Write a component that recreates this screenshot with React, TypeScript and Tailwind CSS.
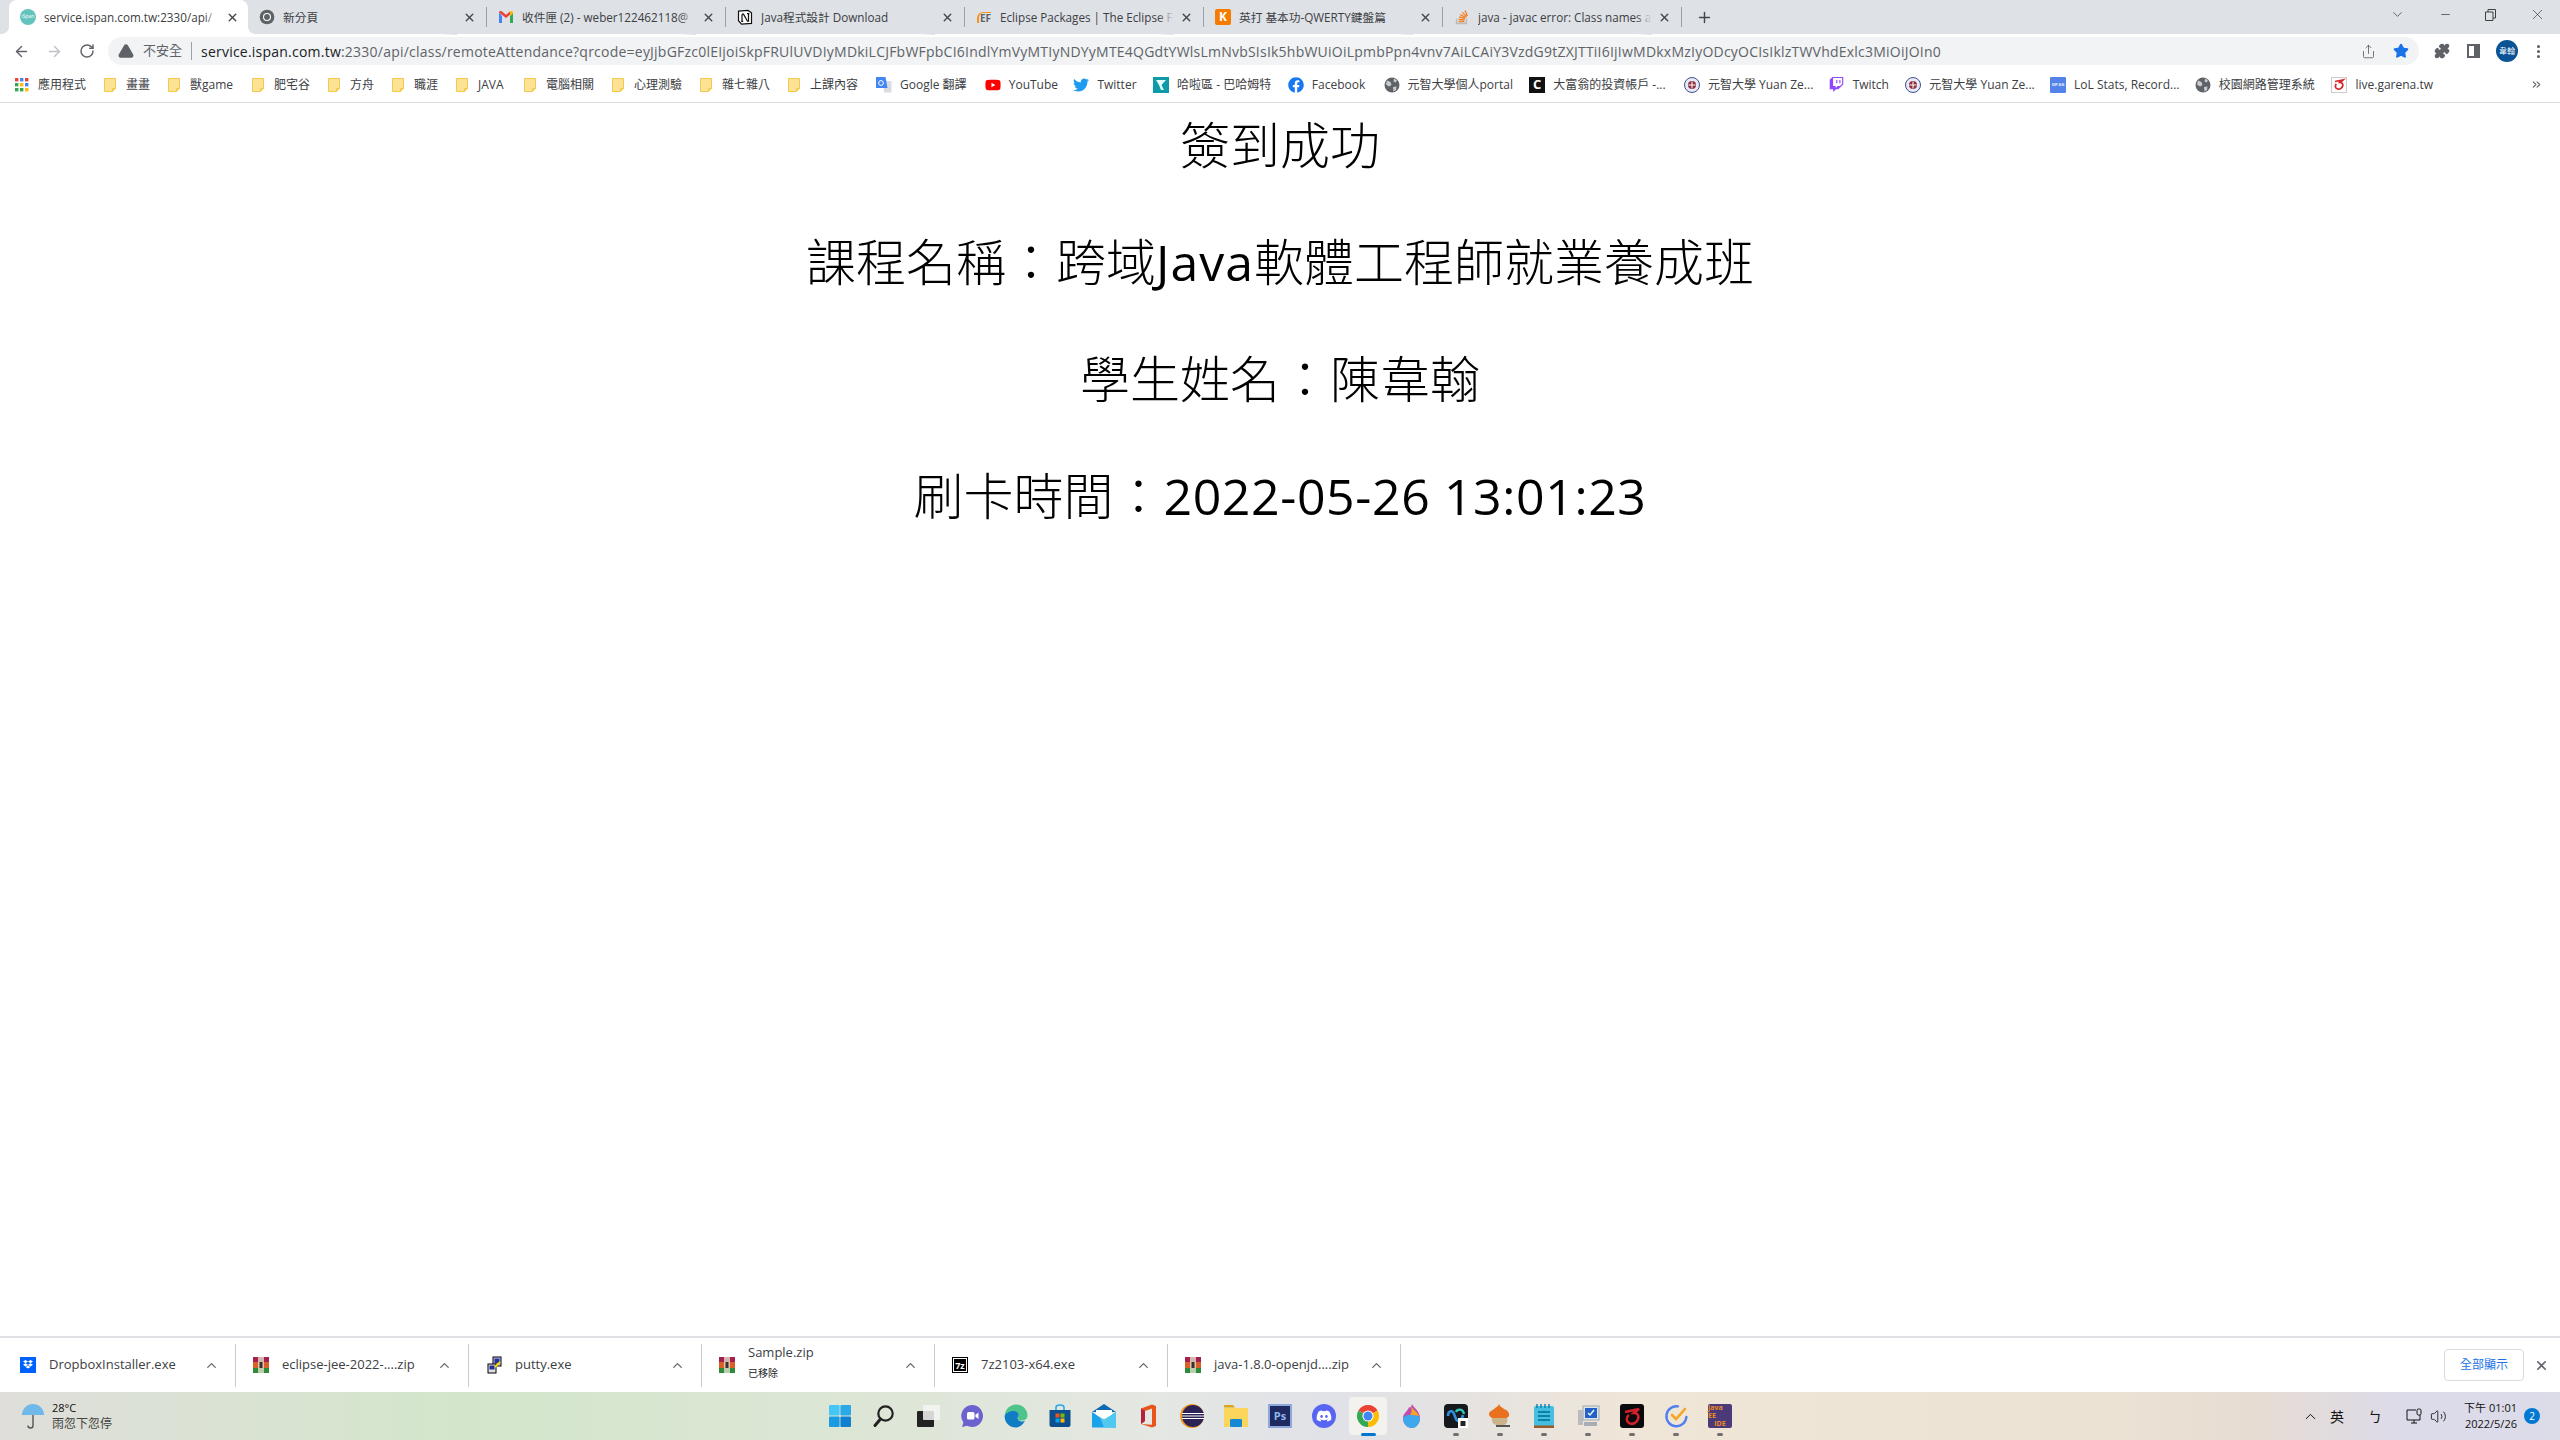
import type { ReactNode } from "react";
import { ArrowLeft, ArrowRight, RotateCw, Share, Star, Puzzle, EllipsisVertical, ChevronDown, ChevronUp, X, Plus, Minus, TriangleAlert, Volume2, ChevronsRight } from "lucide-react";
import { FaDiscord, FaFacebook, FaTwitch, FaTwitter, FaYoutube } from "react-icons/fa";

const Chrome = ({ size = 16 }: { size?: number }) => (
  <svg width={size} height={size} viewBox="0 0 24 24">
    <path d="M12 12L2.47 6.5A11 11 0 0 1 21.53 6.5Z" fill="#ea4335" />
    <path d="M12 12L12 23A11 11 0 0 1 2.47 6.5Z" fill="#34a853" />
    <path d="M12 12L21.53 6.5A11 11 0 0 1 12 23Z" fill="#fbbc05" />
    <circle cx="12" cy="12" r="5.6" fill="#fff" />
    <circle cx="12" cy="12" r="4.5" fill="#4285f4" />
  </svg>
);

const GrayChrome = () => (
  <svg width="16" height="16" viewBox="0 0 24 24">
    <circle cx="12" cy="12" r="11" fill="#5f6368" />
    <circle cx="12" cy="12" r="6" fill="#fff" />
    <circle cx="12" cy="12" r="4.4" fill="#5f6368" />
  </svg>
);

const Folder = () => (
  <svg width="12" height="14" viewBox="0 0 12 14">
    <path d="M.5.5h11v10l-3 3H.5z" fill="#fde293" stroke="#f2c94c" />
    <path d="M8.5 13.5v-3h3" fill="none" stroke="#f2c94c" />
  </svg>
);

const Gmail = () => (
  <svg width="16" height="16" viewBox="0 0 16 16">
    <path d="M1 3.5V14h3V7z" fill="#4285f4" />
    <path d="M15 3.5V14h-3V7z" fill="#34a853" />
    <path d="M1 3.5 8 9l4-3.2V2.6L8 5.7 4 2.6C2.500 1.500 1 2.300 1 3.500z" fill="#ea4335" />
    <path d="M12 2.600v4.400l3-2.400V3.500c0-1.200-1.500-2-3-.9z" fill="#fbbc05" />
  </svg>
);

const Notion = () => (
  <svg width="16" height="16" viewBox="0 0 16 16">
    <path d="M1.500 2.200 11 1.400l3.500 2.400v10.600l-10 .7-3-3.400z" fill="#fff" stroke="#111" strokeWidth="1.200" />
    <path d="M5 5.200v7M5 5.200h1.500l4 7h1V4.600M4.200 12.400h2M10 4.600h2.400" fill="none" stroke="#111" strokeWidth="1.200" />
  </svg>
);

const StackOverflow = () => (
  <svg width="16" height="16" viewBox="0 0 16 16">
    <path d="M2.500 9.500v5h10v-5" fill="none" stroke="#bcbbbb" strokeWidth="1.400" />
    <path d="M4.500 12.500h6M4.600 10.300l6 .6M5.200 8l5.800 1.600M6.400 5.600l5.200 3M8.400 3.400l4.200 4.400M11 1.600l2.400 5.400" stroke="#f48024" strokeWidth="1.300" fill="none" />
  </svg>
);

const tabs: { title: string; icon: ReactNode }[] = [
  { title: "新分頁", icon: <GrayChrome /> },
  { title: "收件匣 (2) - weber122462118@", icon: <Gmail /> },
  { title: "Java程式設計 Download", icon: <Notion /> },
  {
    title: "Eclipse Packages | The Eclipse F",
    icon: <span className="rounded-tl-md border-l-2 border-t border-[#f7941e] pl-[1px] text-[10px] font-bold leading-none text-[#5f6368]">EF</span>,
  },
  {
    title: "英打 基本功-QWERTY鍵盤篇",
    icon: <span className="flex h-4 w-4 items-center justify-center rounded-[2px] bg-[#f57c00] text-[12px] font-bold leading-none text-white">K</span>,
  },
  { title: "java - javac error: Class names a", icon: <StackOverflow /> },
];

const TabTitle = ({ text, bg }: { text: string; bg: string }) => (
  <div className="relative min-w-0 flex-1 overflow-hidden whitespace-nowrap text-[11.7px] leading-[35px] text-[#3c4043]">
    {text}
    <span className={`absolute inset-y-0 right-0 w-4 ${bg}`} />
  </div>
);

const TabStrip = () => (
  <div className="flex h-[34px] shrink-0 items-stretch bg-[#dee1e6] pl-[9px]">
    <div className="relative flex w-[239px] items-center rounded-t-[8px] bg-white pl-[11px] pr-[9px]">
      <span className="absolute -left-2 bottom-0 h-2 w-2 bg-[radial-gradient(circle_at_0_0,transparent_8px,white_8px)]" />
      <span className="absolute -right-2 bottom-0 h-2 w-2 bg-[radial-gradient(circle_at_100%_0,transparent_8px,white_8px)]" />
      <span className="mr-2 flex h-4 w-4 shrink-0 items-center justify-center rounded-full bg-[#63c3bd] text-[5px] text-white">iSpan</span>
      <TabTitle text="service.ispan.com.tw:2330/api/" bg="bg-gradient-to-r from-transparent to-white" />
      <X size={13} strokeWidth={2.6} className="ml-[6px] shrink-0 text-[#45474a]" />
    </div>
    {tabs.map((t) => (
      <div key={t.title} className="flex w-[239px] items-center pl-[11px]">
        <span className="mr-2 flex h-4 w-4 shrink-0 items-center justify-center">{t.icon}</span>
        <TabTitle text={t.title} bg="bg-gradient-to-r from-transparent to-[#dee1e6]" />
        <X size={13} strokeWidth={2.6} className="ml-[6px] shrink-0 text-[#45474a]" />
        <span className="ml-[10px] h-[20px] w-px shrink-0 bg-[#9aa0a6]" />
      </div>
    ))}
    <div className="flex w-[44px] items-center justify-center">
      <Plus size={17} strokeWidth={2} className="text-[#45474a]" />
    </div>
    <div className="flex-1" />
    <div className="flex items-start text-[#3c4043]">
      <ChevronDown size={15} strokeWidth={1.2} className="mr-[34px] mt-[7px]" />
      <Minus size={13} strokeWidth={1.4} className="mr-[33px] mt-[8px]" />
      <svg width="11" height="12" viewBox="0 0 11 12" className="mr-[33px] mt-[9px]">
        <path d="M.5 3h7.500v8.500H.5zM3 3V.5h7.500V9H8" fill="none" stroke="#3c4043" />
      </svg>
      <X size={17} strokeWidth={1} className="mr-[14px] mt-[6px]" />
    </div>
  </div>
);

const Toolbar = () => (
  <div className="flex h-[34px] shrink-0 items-center bg-white">
    <div className="flex w-[108px] shrink-0 items-center pl-[13px] text-[#5f6368]">
      <ArrowLeft size={17} strokeWidth={2} />
      <ArrowRight size={17} strokeWidth={2} className="ml-[16px] text-[#bdc1c6]" />
      <RotateCw size={16} strokeWidth={2.2} className="ml-[16px]" />
    </div>
    <div className="flex h-[28px] w-[2311px] shrink-0 items-center rounded-full bg-[#f1f3f4] pl-[10px] pr-[10px]">
      <TriangleAlert size={16} strokeWidth={2.4} className="shrink-0 fill-[#5f6368] text-[#5f6368]" />
      <span className="ml-[9px] shrink-0 text-[13px] text-[#5f6368]">不安全</span>
      <span className="mx-[9px] h-[18px] w-px shrink-0 bg-[#9aa0a6]" />
      <span className="min-w-0 flex-1 truncate text-[14px] tracking-[0.225px] text-[#5f6368]">
        <span className="text-[#202124]">service.ispan.com.tw</span>
        :2330/api/class/remoteAttendance?qrcode=eyJjbGFzc0lEIjoiSkpFRUlUVDIyMDkiLCJFbWFpbCI6IndlYmVyMTIyNDYyMTE4QGdtYWlsLmNvbSIsIk5hbWUiOiLpmbPpn4vnv7AiLCAiY3VzdG9tZXJTTiI6IjIwMDkxMzIyODcyOCIsIklzTWVhdExlc3MiOiJOIn0
      </span>
      <Share size={15} strokeWidth={1.4} className="ml-[8px] shrink-0 text-[#5f6368]" />
      <Star size={16} className="ml-[17px] shrink-0 fill-[#1a73e8] text-[#1a73e8]" />
    </div>
    <Puzzle size={16} className="ml-[15px] shrink-0 fill-[#5f6368] text-[#5f6368]" />
    <span className="ml-[17px] flex h-[14px] w-[13px] shrink-0 justify-end border-2 border-[#5f6368]">
      <span className="h-full w-[4px] bg-[#5f6368]" />
    </span>
    <span className="ml-[16px] flex h-[22px] w-[22px] shrink-0 items-center justify-center rounded-full bg-[#0b5394] text-[8px] text-white">韋翰</span>
    <EllipsisVertical size={17} strokeWidth={2.4} className="ml-[12px] shrink-0 text-[#5f6368]" />
  </div>
);

const Apps = () => (
  <svg width="14" height="14" viewBox="0 0 14 14">
    {[
      [0, 0, "#ea4335"],
      [5, 0, "#4285f4"],
      [10, 0, "#ea4335"],
      [0, 5, "#34a853"],
      [5, 5, "#fbbc05"],
      [10, 5, "#4285f4"],
      [0, 10, "#34a853"],
      [5, 10, "#34a853"],
      [10, 10, "#fbbc05"],
    ].map(([x, y, c]) => (
      <rect key={`${x}-${y}`} x={x as number} y={y as number} width="3.4" height="3.4" fill={c as string} />
    ))}
  </svg>
);

const GoogleTranslate = () => (
  <svg width="16" height="16" viewBox="0 0 16 16">
    <path d="M7 4h8.500v11.500H8z" fill="#dadce0" />
    <path d="M0 0h9.500l2 11H0z" fill="#4285f4" />
    <circle cx="5" cy="6" r="2.400" fill="none" stroke="#fff" strokeWidth="1" />
  </svg>
);

const GrayGlobe = () => (
  <svg width="16" height="16" viewBox="0 0 16 16">
    <circle cx="8" cy="8" r="7.500" fill="#5f6368" />
    <path d="M3 3.500 6.500 5 7.500 8 5 9.500 2 7.500zM10 1.500l3 2-1.500 2-2-1zM9 10l3.500-.5L12 13l-2.500 1.500z" fill="#c9ccd0" />
  </svg>
);

const Crest = () => (
  <svg width="16" height="16" viewBox="0 0 16 16">
    <circle cx="8" cy="8" r="7.500" fill="#e8eaf6" stroke="#3f4f8f" />
    <circle cx="8" cy="8" r="4" fill="#8e3040" />
    <path d="M8 4.500v7M4.500 8h7" stroke="#fff" />
  </svg>
);

const Bahamut = () => (
  <svg width="16" height="16" viewBox="0 0 16 16">
    <rect width="16" height="16" fill="#0f9aa8" />
    <path d="M3 3h10L8.500 8 11 13H8L6 8z" fill="#e6fbfb" />
  </svg>
);

const Garena = () => (
  <svg width="16" height="16" viewBox="0 0 16 16">
    <rect x=".5" y=".5" width="15" height="15" fill="#fff" stroke="#ccc" />
    <path d="M4 4.500 12 3 9 5.500c2 0 3 1.400 2.800 3C11.400 11 9 12.500 6.600 12 4.200 11.400 3.600 8.600 5.400 7" fill="none" stroke="#d8232a" strokeWidth="1.700" />
  </svg>
);

const folders: { label: string; w: string }[] = [
  { label: "畫畫", w: "w-[24px]" },
  { label: "獸game", w: "w-[44px]" },
  { label: "肥宅谷", w: "w-[36px]" },
  { label: "方舟", w: "w-[24px]" },
  { label: "職涯", w: "w-[24px]" },
  { label: "JAVA", w: "w-[28px]" },
  { label: "電腦相關", w: "w-[48px]" },
  { label: "心理測驗", w: "w-[48px]" },
  { label: "雜七雜八", w: "w-[48px]" },
  { label: "上課內容", w: "w-[48px]" },
];

const bookmarks: { label: string; w: string; icon: ReactNode }[] = [
  { label: "Google 翻譯", w: "w-[68px]", icon: <GoogleTranslate /> },
  { label: "YouTube", w: "w-[48px]", icon: <FaYoutube size={16} className="text-[#ff0000]" /> },
  { label: "Twitter", w: "w-[39px]", icon: <FaTwitter size={16} className="text-[#1d9bf0]" /> },
  { label: "哈啦區 - 巴哈姆特", w: "w-[94px]", icon: <Bahamut /> },
  { label: "Facebook", w: "w-[55px]", icon: <FaFacebook size={16} className="text-[#1877f2]" /> },
  { label: "元智大學個人portal", w: "w-[105px]", icon: <GrayGlobe /> },
  {
    label: "大富翁的投資帳戶 -...",
    w: "w-[114px]",
    icon: <span className="flex h-4 w-4 items-center justify-center bg-[#111] text-[13px] font-bold leading-none text-white">C</span>,
  },
  { label: "元智大學 Yuan Ze...", w: "w-[104px]", icon: <Crest /> },
  { label: "Twitch", w: "w-[36px]", icon: <FaTwitch size={15} className="text-[#9146ff]" /> },
  { label: "元智大學 Yuan Ze...", w: "w-[104px]", icon: <Crest /> },
  {
    label: "LoL Stats, Record...",
    w: "w-[104px]",
    icon: <span className="flex h-4 w-4 items-center justify-center rounded-[1px] bg-[#5383e8] text-[4px] font-bold text-white">OP.GG</span>,
  },
  { label: "校園網路管理系統", w: "w-[96px]", icon: <GrayGlobe /> },
  { label: "live.garena.tw", w: "w-[77px]", icon: <Garena /> },
];

const BookmarkBar = () => (
  <div className="flex h-[35px] shrink-0 items-center border-b border-[#dadce0] bg-white pb-[1px] pl-[15px] text-[12px] text-[#3c4043]">
    <div className="flex flex-1 items-center gap-[18px] whitespace-nowrap">
      <div className="flex items-center gap-[9px]">
        <Apps />
        <span className="w-[48px]">應用程式</span>
      </div>
      {folders.map((f) => (
        <div key={f.label} className="flex items-center gap-[10px]">
          <Folder />
          <span className={f.w}>{f.label}</span>
        </div>
      ))}
      {bookmarks.map((b, i) => (
        <div key={i} className="-mr-[1.3px] flex items-center gap-[8px]">
          <span className="flex w-4 items-center justify-center">{b.icon}</span>
          <span className={b.w}>{b.label}</span>
        </div>
      ))}
    </div>
    <ChevronsRight size={13} className="mr-[17px] text-[#5f6368]" />
  </div>
);

const WinRar = () => (
  <svg width="16" height="16" viewBox="0 0 16 16">
    <rect x="0" y="0" width="16" height="5" fill="#a3214f" />
    <rect x="0" y="5" width="16" height="6" fill="#d9602a" />
    <rect x="0" y="11" width="16" height="5" fill="#2f8a3c" />
    <rect x="5" y="0" width="6" height="16" fill="#e9e4d0" opacity=".75" />
    <rect x="6.500" y="5" width="3" height="6" fill="#333" />
  </svg>
);

const Dropbox = () => (
  <span className="flex h-4 w-4 items-center justify-center bg-[#0061ff]">
    <svg width="10" height="10" viewBox="0 0 10 10" fill="#fff">
      <path d="M2.500 0 5 1.600 2.500 3.200 0 1.600zM7.500 0 10 1.600 7.500 3.200 5 1.600zM2.500 3.200 5 4.800 2.500 6.400 0 4.800zM7.500 3.200 10 4.800 7.500 6.400 5 4.800zM2.500 7 5 5.400 7.500 7 5 8.600z" />
    </svg>
  </span>
);

const Putty = () => (
  <svg width="16" height="18" viewBox="0 0 16 18">
    <rect x="7" y="1" width="8" height="9" fill="#c8c8e8" stroke="#000" />
    <rect x="8.500" y="2.500" width="5" height="5" fill="#2030a0" />
    <rect x="2" y="8" width="8" height="9" fill="#e0e0e0" stroke="#000" />
    <rect x="3.500" y="9.500" width="5" height="4" fill="#2030a0" />
    <path d="M9 11 14 6" stroke="#f5d800" strokeWidth="2" />
  </svg>
);

const SevenZip = () => (
  <span className="flex h-4 w-4 items-center justify-center border border-black bg-white">
    <span className="flex h-[12px] w-[12px] items-center justify-center bg-black text-[9px] font-bold leading-none text-white">7z</span>
  </span>
);

const downloads: { name: string; sub?: string; icon: ReactNode }[] = [
  { name: "DropboxInstaller.exe", icon: <Dropbox /> },
  { name: "eclipse-jee-2022-....zip", icon: <WinRar /> },
  { name: "putty.exe", icon: <Putty /> },
  { name: "Sample.zip", sub: "已移除", icon: <WinRar /> },
  { name: "7z2103-x64.exe", icon: <SevenZip /> },
  { name: "java-1.8.0-openjd....zip", icon: <WinRar /> },
];

const DownloadBar = () => (
  <div className="flex h-[56px] shrink-0 items-center border-t-2 border-[#dfe1e5] bg-white pl-[3px]">
    {downloads.map((d) => (
      <div key={d.name} className="flex h-[43px] w-[233px] shrink-0 items-center border-r border-[#c8cacd] pl-[17px] pr-[16px]">
        <span className="flex w-4 shrink-0 items-center justify-center">{d.icon}</span>
        <div className="ml-[13px] min-w-0 flex-1 text-[#3c4043]">
          <div className={`whitespace-nowrap text-[13px] ${d.sub ? "-mt-[8px]" : ""}`}>{d.name}</div>
          {d.sub && <div className="mt-[5px] text-[10px] leading-[12px] text-[#202124]">{d.sub}</div>}
        </div>
        <ChevronUp size={15} strokeWidth={2} className="shrink-0 text-[#5f6368]" />
      </div>
    ))}
    <div className="flex-1" />
    <div className="flex h-[32px] w-[80px] items-center justify-center rounded-[4px] border border-[#dadce0] text-[12px] text-[#1a73e8]">全部顯示</div>
    <X size={15} strokeWidth={2.6} className="ml-[10px] mr-[11px] text-[#5f6368]" />
  </div>
);

const Icon24 = ({ children }: { children: ReactNode }) => (
  <svg width="24" height="24" viewBox="0 0 24 24">
    {children}
  </svg>
);

const TaskIcons: { key: string; dot?: boolean; node: ReactNode }[] = [
  {
    key: "start",
    node: (
      <Icon24>
        <rect x="1" y="1" width="10.600" height="10.600" rx="1" fill="#46c6f4" />
        <rect x="12.400" y="1" width="10.600" height="10.600" rx="1" fill="#2aa9ea" />
        <rect x="1" y="12.400" width="10.600" height="10.600" rx="1" fill="#1a9ae0" />
        <rect x="12.400" y="12.400" width="10.600" height="10.600" rx="1" fill="#0f7fd0" />
      </Icon24>
    ),
  },
  {
    key: "search",
    node: (
      <Icon24>
        <circle cx="13.500" cy="9.500" r="7.200" fill="none" stroke="#222" strokeWidth="2.200" />
        <path d="M8.500 15 3 21.500" stroke="#222" strokeWidth="3" strokeLinecap="round" />
      </Icon24>
    ),
  },
  {
    key: "view",
    node: (
      <Icon24>
        <rect x="1" y="7" width="17" height="16" rx="1" fill="#222" />
        <rect x="7" y="1" width="17" height="15" rx="1" fill="#f4f4f4" fillOpacity=".85" />
      </Icon24>
    ),
  },
  {
    key: "chat",
    node: (
      <Icon24>
        <path d="M12 1a11 11 0 1 1-5 20.800L2 23l1.400-4.600A11 11 0 0 1 12 1z" fill="#6b62cf" />
        <rect x="7" y="8" width="7.500" height="7.500" rx="1.500" fill="#fff" />
        <path d="M15.400 10.800 18.500 8.600v6.400l-3.100-2.200z" fill="#fff" />
      </Icon24>
    ),
  },
  {
    key: "edge",
    node: (
      <Icon24>
        <path d="M12 .5C18 .5 23.500 5 23.500 11.500c0 3-2.500 5-5.500 5-2.500 0-4.500-1.200-4.500-2.600 0-1 1.300-1.400 1.300-3.200C14.800 8.500 12.500 7 9.500 7 5 7 1.500 9 .6 12 1 5.500 6 .5 12 .5z" fill="#4cc58a" />
        <path d="M.6 12C1.500 9 5 7 9.500 7c3 0 5.300 1.500 5.300 3.700 0 1.800-1.300 2.200-1.300 3.200 0 2 3.500 4.500 7.500 3.200C18.500 21 15.500 23.500 12 23.500 5.500 23.500.5 18.500.6 12z" fill="#0f7cc4" />
      </Icon24>
    ),
  },
  {
    key: "store",
    node: (
      <Icon24>
        <path d="M8 6V3.500C8 2 9.500 1 12 1s4 1 4 2.500V6" fill="none" stroke="#2aa9ea" strokeWidth="1.600" />
        <path d="M1.500 6h21v15a2 2 0 0 1-2 2h-17a2 2 0 0 1-2-2z" fill="#0c4f8c" />
        <rect x="7.500" y="9.500" width="4" height="4" fill="#f25022" />
        <rect x="12.500" y="9.500" width="4" height="4" fill="#7fba00" />
        <rect x="7.500" y="14.500" width="4" height="4" fill="#00a4ef" />
        <rect x="12.500" y="14.500" width="4" height="4" fill="#ffb900" />
      </Icon24>
    ),
  },
  {
    key: "mail",
    node: (
      <Icon24>
        <path d="M0 8 12 0l12 8z" fill="#0c68b5" />
        <path d="M4 6h16v8H4z" fill="#fff" />
        <path d="M0 8l12 8 12-8v15.500H0z" fill="#1aa3e8" />
        <path d="M24 8v15.500H12L8 13.500l4 2.500z" fill="#50c8f0" />
      </Icon24>
    ),
  },
  {
    key: "office",
    node: (
      <Icon24>
        <path d="M5 4.500 16 .5l4 1.500v20l-4 1.500-11-3.500 11 .8V4.500L9 7v10l-4 3z" fill="#e8541e" />
        <path d="M5 4.500 9 7v10l-4 3z" fill="#b5203a" />
      </Icon24>
    ),
  },
  {
    key: "eclipse",
    node: (
      <Icon24>
        <circle cx="12" cy="12" r="12" fill="#f39a1f" />
        <circle cx="13" cy="12" r="11" fill="#2c2255" />
        <path d="M2 9.500h22M2 12h22M2 14.500h22" stroke="#fff" strokeWidth="1.200" />
      </Icon24>
    ),
  },
  {
    key: "folder",
    node: (
      <Icon24>
        <path d="M0 2a1 1 0 0 1 1-1h8l2 2.500H0z" fill="#d9a514" />
        <path d="M0 4h24v19H0z" fill="#fcd65b" />
        <rect x="6" y="15" width="12" height="8" rx="1.200" fill="#1787d4" />
      </Icon24>
    ),
  },
  {
    key: "ps",
    node: <span className="flex h-[24px] w-[24px] items-center justify-center border-2 border-[#8ea8dc] bg-[#1f2a60] text-[11px] font-bold text-[#8fb8f0]">Ps</span>,
  },
  {
    key: "discord",
    node: (
      <span className="flex h-[24px] w-[24px] items-center justify-center rounded-full bg-[#5865f2]">
        <FaDiscord size={16} className="text-white" />
      </span>
    ),
  },
  { key: "chrome", node: <Chrome size={24} /> },
  {
    key: "paint",
    node: (
      <Icon24>
        <path d="M12 0c1 3 8 7 8 14a8.500 10 0 0 1-17 0C3 9 8 7 9 3c1 1 2 1 3-3z" fill="#c14db0" />
        <path d="M3 14c3-4 9-4 17-1 0 6-3 11-8 11s-9-4-9-10z" fill="#3da8ec" />
        <path d="M11 3c2 2 7 6 8 9-3-1-6-1-9-1 2-2 2-5 1-8z" fill="#f5a623" />
      </Icon24>
    ),
  },
  {
    key: "webex",
    dot: true,
    node: (
      <Icon24>
        <rect width="24" height="24" rx="4" fill="#15181c" />
        <path d="M4 12c0-6 5-6 6-2l2 5c1 3 6 2 7-4" fill="none" stroke="#2f8de0" strokeWidth="2.600" />
        <path d="M12 8c1-3 7-4 8 2" fill="none" stroke="#36c7b8" strokeWidth="2.400" />
        <rect x="14" y="14" width="10" height="10" fill="#fff" />
        <rect x="16.500" y="17" width="5" height="5" fill="#222" />
      </Icon24>
    ),
  },
  {
    key: "torch",
    dot: true,
    node: (
      <Icon24>
        <path d="M11 0c1 3 3 3 5 5 3 1 6 4 5 7-1 2-4 3-10 3S1 13 1 10c0-3 5-4 6-6 2-1 3-2 4-4z" fill="#e8701e" />
        <path d="M4 14h15c1 3 0 6-3 7H8c-3-1-5-4-4-7z" fill="#c9b48c" />
        <path d="M8 22h14" stroke="#555" strokeWidth="2" />
      </Icon24>
    ),
  },
  {
    key: "notepad",
    dot: true,
    node: (
      <Icon24>
        <rect x="2" y="2" width="20" height="21" rx="1.500" fill="#45bfe0" />
        <path d="M2 21.500h20V24H2z" fill="#9c5a2a" />
        <path d="M6 8h12M6 12h12M6 16h12" stroke="#0e7fa8" strokeWidth="2" />
        <path d="M5 0v4M9 0v4M13 0v4M17 0v4" stroke="#0e7fa8" strokeWidth="1.400" />
      </Icon24>
    ),
  },
  {
    key: "computer",
    dot: true,
    node: (
      <Icon24>
        <rect x="7" y="2" width="16" height="14" fill="#dfe3ea" stroke="#9aa" />
        <rect x="9" y="4" width="12" height="10" fill="#2460c8" />
        <path d="M12 9l2 2 4-5" stroke="#dfe" strokeWidth="1.400" fill="none" />
        <rect x="2" y="6" width="5" height="15" fill="#b8bcc0" />
        <rect x="8" y="18" width="13" height="4" fill="#a9adb3" />
      </Icon24>
    ),
  },
  {
    key: "garena",
    dot: true,
    node: (
      <Icon24>
        <rect width="24" height="24" rx="3" fill="#0a0a0c" />
        <path d="M5 8 19 5l-5 4c4 0 5 3 4 6-1 4-6 6-9 4-3-2-3-6 0-8" fill="none" stroke="#d4202a" strokeWidth="2.600" />
      </Icon24>
    ),
  },
  {
    key: "tick",
    dot: true,
    node: (
      <Icon24>
        <path d="M14 2.400A10 10 0 1 0 22.400 13" fill="none" stroke="#4f7ef0" strokeWidth="2.400" strokeLinecap="round" />
        <path d="M8 11l4 4 9-10" fill="none" stroke="#f5a623" strokeWidth="2.600" strokeLinecap="round" />
      </Icon24>
    ),
  },
  {
    key: "javaee",
    dot: true,
    node: (
      <span className="flex h-[24px] w-[24px] flex-col items-center justify-center rounded-[2px] bg-[#4a3a78] text-[7px] font-bold leading-[8px] text-[#f08a24]">
        <span>Java EE</span>
        <span>IDE</span>
      </span>
    ),
  },
];

const Taskbar = () => (
  <div className="grid h-[48px] shrink-0 grid-cols-[1fr_auto_1fr] items-center bg-[linear-gradient(90deg,#dfdeda_0%,#d9e3d2_10%,#d3e6cb_18%,#dde6d6_34%,#e4e7e2_45%,#e0e2e8_52%,#e6e3df_58%,#f0e6d8_64%,#ece2d4_82%,#e6dcd2_88%,#dcdbea_94%,#dcdbe8_100%)]">
    <div className="flex items-center pl-[21px]">
      <svg width="24" height="30" viewBox="0 0 24 30">
        <path d="M1 14a11 11 0 0 1 22 0z" fill="#6fb8ea" />
        <path d="M12 14v10.500a2.500 2.500 0 0 1-5 0" fill="none" stroke="#555" strokeWidth="1.400" />
      </svg>
      <div className="ml-[7px] text-[11px] leading-[16px] text-[#111]">
        <div>28°C</div>
        <div className="text-[12px] text-[#444]">雨忽下忽停</div>
      </div>
    </div>
    <div className="flex items-center">
      {TaskIcons.map((t) => (
        <div key={t.key} className="relative flex h-[48px] w-[44px] items-center justify-center">
          {t.key === "chrome" && <span className="absolute inset-x-[3px] top-[5px] h-[38px] rounded-[4px] bg-[#f4f2ee]" />}
          <span className="relative flex items-center justify-center">{t.node}</span>
          {t.key === "chrome" && <span className="absolute left-[15px] top-[41px] h-[3px] w-[15px] rounded-full bg-[#0078d4]" />}
          {t.dot && <span className="absolute left-[19px] top-[41px] h-[3px] w-[6px] rounded-full bg-[#707070]" />}
        </div>
      ))}
    </div>
    <div className="flex items-center justify-end text-[#111]">
      <ChevronUp size={17} strokeWidth={1.4} />
      <span className="ml-[11px] text-[14px]">英</span>
      <span className="ml-[24px] text-[14px]">ㄅ</span>
      <svg width="17" height="16" viewBox="0 0 17 16" className="ml-[24px]">
        <path d="M10 2H1v10h13V7M5 15h6M8 12v3" fill="none" stroke="#111" />
        <rect x="11" y="1" width="4" height="6" rx="1.500" fill="none" stroke="#111" />
      </svg>
      <Volume2 size={17} strokeWidth={1.2} className="ml-[7px]" />
      <div className="ml-[17px] text-right text-[11px] leading-[16px]">
        <div>下午 01:01</div>
        <div>2022/5/26</div>
      </div>
      <span className="ml-[7px] mr-[20px] flex h-[16px] w-[16px] items-center justify-center rounded-full bg-[#0078d4] text-[10px] text-white">2</span>
    </div>
  </div>
);

export default function App() {
  return (
    <div className="flex h-[1440px] w-[2560px] flex-col overflow-hidden bg-white font-['Open_Sans','Noto_Sans_CJK_TC',sans-serif]">
      <TabStrip />
      <Toolbar />
      <BookmarkBar />
      <main className="flex flex-1 flex-col items-center gap-[47px] pt-[7px] text-[50px] font-light leading-[70px] text-black">
        <div>簽到成功</div>
        <div>
          課程名稱：跨域<span className="font-normal tracking-[1px]">Java</span>軟體工程師就業養成班
        </div>
        <div>學生姓名：陳韋翰</div>
        <div>
          刷卡時間：<span className="font-normal tracking-[0.6px]">2022-05-26 13:01:23</span>
        </div>
      </main>
      <DownloadBar />
      <Taskbar />
    </div>
  );
}
